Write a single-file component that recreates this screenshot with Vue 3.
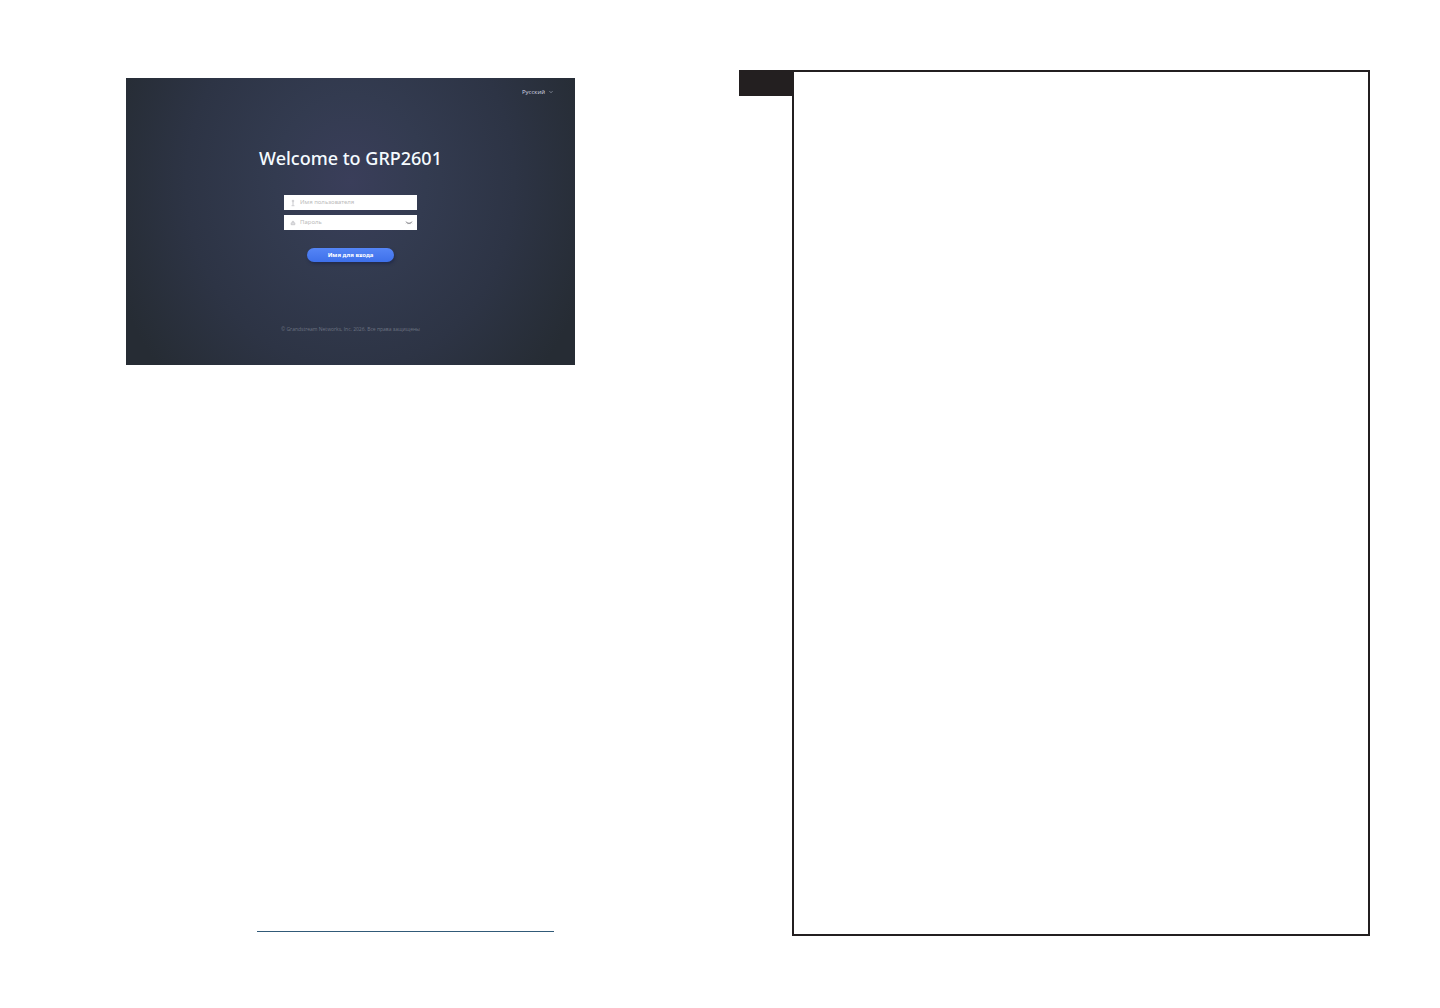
<script setup>
import { ref } from 'vue'

const language = ref('ru')
const username = ref('')
const password = ref('')
const passwordVisible = ref(false)
</script>

<template>
  <main class="spread">
    <section class="page page-left">
      <form class="login" @submit.prevent>
        <div class="language">
          <select v-model="language" aria-label="Язык">
            <option value="ru">Русский</option>
          </select>
          <svg class="chevron" viewBox="0 0 4 4" aria-hidden="true">
            <path d="M0.5 1.2 2 2.7 3.5 1.2" />
          </svg>
        </div>

        <h1>Welcome to GRP2601</h1>

        <div class="fields">
          <label class="field">
            <svg class="icon" viewBox="0 0 8 8" aria-hidden="true">
              <circle cx="4" cy="2" r="0.8" />
              <path d="M4 3V6M2.6 6.7h2.8" />
            </svg>
            <input v-model="username" type="text" placeholder="Имя пользователя" aria-label="Имя пользователя" />
          </label>
          <label class="field">
            <svg class="icon" viewBox="0 0 8 8" aria-hidden="true">
              <path d="M3.2 3.6V3a0.8 0.8 0 0 1 1.6 0v0.6M2.2 3.9h3.6v1.8H2.2zM4 4.4v0.8" />
            </svg>
            <input v-model="password" :type="passwordVisible ? 'text' : 'password'" placeholder="Пароль" aria-label="Пароль" />
            <button class="reveal" type="button" aria-label="Показать пароль" @click="passwordVisible = !passwordVisible">
              <svg viewBox="0 0 8 6" aria-hidden="true">
                <path d="M1 1.6C2.4 3.7 5.6 3.7 7 1.6M1.9 2.4 1.1 3.2M3.2 3 3 4.1M4.8 3 5 4.1M6.1 2.4 6.9 3.2" />
              </svg>
            </button>
          </label>
        </div>

        <button class="submit" type="submit">Имя для входа</button>

        <footer>© Grandstream Networks, Inc. 2026. Все права защищены</footer>
      </form>

      <hr class="rule" />
    </section>

    <section class="page page-right">
      <div class="tab"></div>
      <div class="frame"></div>
    </section>
  </main>
</template>

<style>
body {
  margin: 0;
  background: #fff;
}
</style>

<style scoped>
.spread {
  display: grid;
  grid-template-columns: 1fr 1fr;
  min-height: 100vh;
  font-family: "Open Sans", "Noto Sans", sans-serif;
}

.page {
  display: flex;
  box-sizing: border-box;
}

.page-left {
  flex-direction: column;
  justify-content: space-between;
  padding: 78px 145px 76px 126px;
}

.page-right {
  align-items: stretch;
  padding: 70px 70px 72px 19px;
}

.login {
  display: flex;
  flex-direction: column;
  align-items: center;
  box-sizing: border-box;
  padding: 8px 22px 31px;
  background: radial-gradient(ellipse 56% 100% at 50% 36%, #3a3e5a 0%, #333b50 30%, #2d3445 65%, #262c34 100%);
}

.language {
  display: flex;
  align-items: center;
  align-self: flex-end;
  gap: 3px;
  height: 12px;
}

.language select {
  appearance: none;
  padding: 0;
  border: 0;
  background: transparent;
  color: #d3d8e2;
  font: 6px/12px "Open Sans", sans-serif;
}

.language option {
  color: #2d3445;
}

.chevron {
  width: 4px;
  height: 4px;
  fill: none;
  stroke: #a5acba;
  stroke-width: 0.7;
}

h1 {
  margin: 48px 0 25px;
  color: #f5fbff;
  font-family: "Noto Sans", sans-serif;
  font-size: 18px;
  font-weight: 500;
  line-height: 24px;
  white-space: nowrap;
}

.fields {
  display: flex;
  flex-direction: column;
  gap: 5px;
  width: 133px;
}

.field {
  display: flex;
  align-items: center;
  box-sizing: border-box;
  height: 15px;
  padding: 0 4px 0 5px;
  background: #fff;
}

.icon {
  flex: none;
  width: 8px;
  height: 8px;
  margin-right: 3px;
  fill: none;
  stroke: #b5b5ba;
  stroke-width: 0.7;
}

.field input {
  flex: 1;
  min-width: 0;
  height: 15px;
  padding: 0;
  border: 0;
  outline: 0;
  background: transparent;
  color: #444;
  font: 6px/15px "Noto Sans", sans-serif;
}

.field input::placeholder {
  color: #bcbcbc;
  opacity: 1;
}

.reveal {
  display: flex;
  padding: 0;
  border: 0;
  background: transparent;
}

.reveal svg {
  width: 8px;
  height: 6px;
  fill: none;
  stroke: #77777c;
  stroke-width: 0.8;
}

.submit {
  width: 87px;
  height: 14px;
  margin-top: 18px;
  padding: 0;
  border: 0;
  border-radius: 7px;
  background: linear-gradient(#5585f6, #3e70ea);
  box-shadow: 1px 2px 3px rgba(20, 30, 70, 0.5);
  color: #fff;
  font: 700 6px/14px "Noto Sans", sans-serif;
}

footer {
  margin-top: 62px;
  color: #6d7382;
  font-size: 5px;
  line-height: 10px;
  white-space: nowrap;
}

.rule {
  width: 297px;
  height: 1px;
  margin: 0 0 0 131px;
  border: 0;
  background: #315a78;
}

.tab {
  flex: none;
  width: 53px;
  height: 26px;
  background: #231f20;
}

.frame {
  flex: 1;
  border: 2px solid #231f20;
}
</style>
